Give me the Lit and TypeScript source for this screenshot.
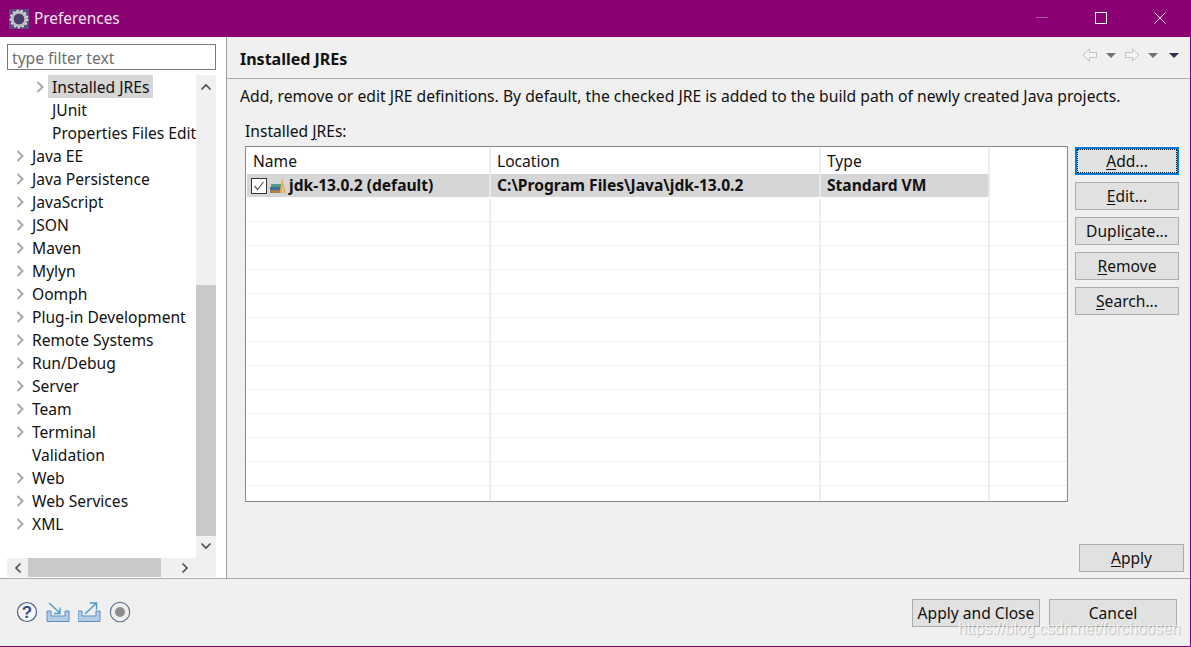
import { LitElement, html, css, svg } from "lit";
import { customElement } from "lit/decorators.js";

const arrow = svg`<path d="M1.5 1 L6.5 6 L1.5 11" fill="none" stroke="#a8a8a8" stroke-width="2"/>`;
const treeItems: [string, boolean, boolean][] = [
  ["Installed JREs", true, true],
  ["JUnit", true, false],
  ["Properties Files Editor", true, false],
  ["Java EE", false, false],
  ["Java Persistence", false, false],
  ["JavaScript", false, false],
  ["JSON", false, false],
  ["Maven", false, false],
  ["Mylyn", false, false],
  ["Oomph", false, false],
  ["Plug-in Development", false, false],
  ["Remote Systems", false, false],
  ["Run/Debug", false, false],
  ["Server", false, false],
  ["Team", false, false],
  ["Terminal", false, false],
  ["Validation", false, false],
  ["Web", false, false],
  ["Web Services", false, false],
  ["XML", false, false],
];
const noArrow = new Set(["JUnit", "Properties Files Editor", "Validation"]);

@customElement("app-root")
export class AppRoot extends LitElement {
  static styles = css`
    :host { display: block; width: 1191px; height: 647px; position: relative; overflow: hidden;
      font-family: "Noto Sans", "Open Sans", sans-serif; font-size: 15.6px; color: #111; background: #f0f0f0; }
    .win { height: 647px; display: grid; grid-template-rows: 37px 1fr 67px; border-right: 1px solid #8b0075; border-bottom: 1px solid #8b0075; box-sizing: border-box; }
    .title { background: #8b0073; color: #f6e8f2; display: flex; align-items: center; padding-left: 9px; gap: 5px; font-size: 15.4px; }
    .title .spacer { flex: 1; }
    .title svg { display: block; }
    .wbtn { width: 54px; display: flex; justify-content: center; margin-top: -1px; }
    .wbtn.close { margin-right: 3px; }
    .main { display: grid; grid-template-columns: 227px 1fr; border-bottom: 1px solid #aaa; min-height: 0; }
    .left { background: #fff; border-right: 1px solid #a0a0a0; padding: 7px 10px 0 7px; display: flex; flex-direction: column; min-height: 0; }
    .filter { height: 26px; box-sizing: border-box; border: 1px solid #7a7a7a; background: #fff; color: #6d6d6d; padding-left: 4px; line-height: 26px; flex: none; }
    .treewrap { margin-top: 5px; height: 483px; display: grid; grid-template-columns: 189px 20px; flex: none; }
    .tree { overflow: hidden; }
    .row { height: 23px; display: flex; align-items: center; white-space: nowrap; position: relative; }
    .row svg { flex: none; width: 8px; height: 12px; margin-left: 9px; margin-right: 8px; }
    .row.child svg { margin-left: 29px; margin-right: 4px; }
    .row.none svg { visibility: hidden; }
    .row .lbl { padding: 0 4px 0 0; height: 23px; line-height: 25px; }
    .row.child .lbl { padding-left: 4px; }
    .row.sel .lbl { background: #d6d6d6; }
    .vbar { background: #f0f0f0; display: grid; grid-template-rows: 23px 187px 251px 1fr; }
    .vbar .thumb { background: #c9c9c9; grid-row: 3; }
    .vbar .up, .vbar .down { display: flex; justify-content: center; align-items: center; }
    .vbar .down { grid-row: 4; padding-bottom: 2px; }
    .hbar { height: 19px; width: 209px; background: #f0f0f0; display: grid; grid-template-columns: 21px 133px 1fr; flex: none; }
    .hbar .thumb { background: #c9c9c9; }
    .hbar div { display: flex; align-items: center; justify-content: center; }
    .hbar .next { justify-content: flex-start; padding-left: 20px; }
    .right { background: #f0f0f0; display: flex; flex-direction: column; min-height: 0; }
    .head { height: 42px; box-sizing: border-box; border-bottom: 1px solid #a8a8a8; display: flex; align-items: center; padding: 0 10px 0 13px; }
    .head b { flex: 1; font-weight: 700; font-size: 16px; margin-top: 2px; }
    .nav { display: flex; align-items: flex-start; margin-top: -5px; }
    .nav svg { display: block; }
    .desc { padding: 5px 0 0 13px; height: 24px; line-height: 24px; font-size: 15.7px; }
    .lab { padding: 11px 0 0 18px; line-height: 24px; height: 24px; }
    u { text-underline-offset: 2px; text-decoration-thickness: 1px; }
    .body { display: flex; padding: 3px 0 0 18px; gap: 7px; }
    .table { width: 823px; height: 356px; box-sizing: border-box; border: 1px solid #8a8a8a; background: #fff; overflow: hidden; flex: none; }
    .tr { display: grid; grid-template-columns: 245px 330px 169px 1fr; height: 24px; box-sizing: border-box; border-bottom: 1px solid #eef0f4; }
    .tr > div { border-right: 2px solid #eaedf4; padding-left: 6px; display: flex; align-items: center; white-space: nowrap; line-height: 22px; }
    .tr > div:last-child { border-right: 0; }
    .tr > div:first-child { padding-left: 7px; }
    .tr.hd { height: 27px; border-bottom: 0; }
    .tr.data { font-weight: 700; height: 23px; border-bottom: 0; margin-bottom: 1px; }
    .tr.data > div { padding-bottom: 1px; }
    .tr.data > div:not(:last-child) { background: #d6d6d6; border-right-color: #e6e8ee; }
    .tr.data > div:first-child { margin-left: 1px; padding-left: 4px; gap: 3px; }
    .tr.data svg { flex: none; display: block; margin-top: 1px; }
    .btns { display: flex; flex-direction: column; gap: 7px; width: 104px; padding-top: 1px; }
    .btn { height: 28px; box-sizing: border-box; border: 1px solid #adadad; background: #e1e1e1; display: flex; align-items: center; justify-content: center; color: #111; }
    .btn.def { border: 2px solid #0078d7; position: relative; }
    .btn.def::after { content: ""; position: absolute; inset: 0; border: 1px dotted #111; }
    .applyrow { display: flex; justify-content: flex-end; padding: 42px 6px 0 0; }
    .applyrow .btn { width: 105px; }
    .foot { display: flex; align-items: center; padding: 0 13px 0 16px; background: #f0f0f0; }
    .foot .icons { display: flex; gap: 8px; flex: 1; align-items: center; margin-top: -1px; }
    .foot .icons svg { display: block; }
    .foot .icons svg.rec { margin-left: -1px; }
    .foot .btn { width: 128px; margin-left: 9px; }
    .wm { position: absolute; left: 958px; top: 620px; font-family: "Liberation Sans", sans-serif; font-size: 15.7px; color: rgba(255,255,255,.72); text-shadow: 1px 1px 1px rgba(0,0,0,.22); pointer-events: none; white-space: nowrap; }
  `;

  render() {
    const emptyRows = Array.from({ length: 13 });
    return html`
      <div class="win">
        <div class="title">
          <svg width="20" height="20" viewBox="0 0 20 20">
            <rect width="20" height="20" fill="#5c4a80"/>
            <circle cx="10" cy="10" r="6.8" fill="none" stroke="#bdbdbd" stroke-width="3"/>
            <circle cx="10" cy="10" r="8.6" fill="none" stroke="#e8e8e8" stroke-width="1.6" stroke-dasharray="2 2.2"/>
            <circle cx="10" cy="10" r="5.2" fill="#4a3f68"/>
          </svg>
          <span>Preferences</span>
          <span class="spacer"></span>
          <div class="wbtn"><svg width="12" height="12"><rect y="5" width="12" height="1" fill="#a85a98"/></svg></div>
          <div class="wbtn"><svg width="12" height="12"><rect x=".5" y=".5" width="11" height="11" fill="none" stroke="#fff"/></svg></div>
          <div class="wbtn close"><svg width="12" height="12"><path d="M.5 .5 L11.5 11.5 M11.5 .5 L.5 11.5" stroke="#f6e6f2" stroke-width="1"/></svg></div>
        </div>
        <div class="main">
          <div class="left">
            <div class="filter">type filter text</div>
            <div class="treewrap">
              <div class="tree">
                ${treeItems.map(([t, child, sel]) => html`
                  <div class="row ${child ? "child" : ""} ${sel ? "sel" : ""} ${noArrow.has(t) ? "none" : ""}">
                    <svg viewBox="0 0 8 12">${arrow}</svg><span class="lbl">${t}</span>
                  </div>`)}
              </div>
              <div class="vbar">
                <div class="up"><svg width="12" height="8"><path d="M1.5 6.5 L6 2 L10.5 6.5" fill="none" stroke="#505050" stroke-width="1.7"/></svg></div>
                <div></div>
                <div class="thumb"></div>
                <div class="down"><svg width="12" height="8"><path d="M1.5 1.5 L6 6 L10.5 1.5" fill="none" stroke="#505050" stroke-width="1.7"/></svg></div>
              </div>
            </div>
            <div class="hbar">
              <div><svg width="8" height="12"><path d="M6.5 1.5 L2 6 L6.5 10.5" fill="none" stroke="#505050" stroke-width="1.7"/></svg></div>
              <div class="thumb"></div>
              <div class="next"><svg width="8" height="12"><path d="M1.5 1.5 L6 6 L1.5 10.5" fill="none" stroke="#505050" stroke-width="1.7"/></svg></div>
            </div>
          </div>
          <div class="right">
            <div class="head">
              <b>Installed JREs</b>
              <div class="nav">
                <svg width="98" height="14" viewBox="0 0 98 14">
                  <path d="M1 7 L7.5 1 V4.5 H14.5 V9.5 H7.5 V13 Z" fill="#f4f4f4" stroke="#c2c2c2"/>
                  <path d="M24 5 H34 L29 10 Z" fill="#707070"/>
                  <path d="M57 7 L50.5 1 V4.5 H43.5 V9.5 H50.5 V13 Z" fill="#f4f4f4" stroke="#c2c2c2"/>
                  <path d="M66 5 H76 L71 10 Z" fill="#707070"/>
                  <path d="M87 5 H97 L92 10 Z" fill="#3a2a55"/>
                </svg>
              </div>
            </div>
            <div class="desc">Add, remove or edit JRE definitions. By default, the checked JRE is added to the build path of newly created Java projects.</div>
            <div class="lab">Installed <u>J</u>REs:</div>
            <div class="body">
              <div class="table">
                <div class="tr hd"><div>Name</div><div>Location</div><div>Type</div><div></div></div>
                <div class="tr data">
                  <div>
                    <svg width="16" height="16" viewBox="0 0 16 16"><rect x=".5" y=".5" width="15" height="15" fill="#fff" stroke="#333"/><path d="M3.5 8 L6.5 11.5 L12.5 4" fill="none" stroke="#555" stroke-width="1.2"/></svg>
                    <svg width="16" height="16" viewBox="0 0 16 16"><rect x="1" y="6" width="10" height="3" fill="#4f9a86"/><rect x="0" y="9" width="11" height="3" fill="#3f6f9f"/><rect x="0" y="12" width="12" height="3" fill="#b07a4a"/><path d="M9.5 15 L12 0 L16 15 H13.6 L12.3 8 L11.4 15 Z" fill="#eab040"/></svg>
                    <span>jdk-13.0.2 (default)</span>
                  </div>
                  <div>C:\\Program Files\\Java\\jdk-13.0.2</div>
                  <div>Standard VM</div>
                  <div></div>
                </div>
                ${emptyRows.map(() => html`<div class="tr"><div></div><div></div><div></div><div></div></div>`)}
              </div>
              <div class="btns">
                <div class="btn def"><span><u>A</u>dd...</span></div>
                <div class="btn"><span><u>E</u>dit...</span></div>
                <div class="btn"><span>Dupli<u>c</u>ate...</span></div>
                <div class="btn"><span><u>R</u>emove</span></div>
                <div class="btn"><span><u>S</u>earch...</span></div>
              </div>
            </div>
            <div class="applyrow"><div class="btn"><span><u>A</u>pply</span></div></div>
          </div>
        </div>
        <div class="foot">
          <div class="icons">
            <svg width="22" height="22" viewBox="0 0 22 22"><circle cx="11" cy="11" r="9.5" fill="#f4f6f8" stroke="#4a6080" stroke-width="1.2"/><text x="11" y="17" text-anchor="middle" font-family="Liberation Sans" font-weight="700" font-size="17" fill="#3a4e78">?</text></svg>
            <svg width="24" height="22" viewBox="0 0 24 22"><path d="M1 10 V20.5 H23 V10 H19 V15 H5 V10 Z" fill="#b4cde6" stroke="#5f8fbf"/><path d="M3 2 L14 12 M14 6.5 V12.5 H8" fill="none" stroke="#4a9ac8" stroke-width="1.4"/></svg>
            <svg width="24" height="22" viewBox="0 0 24 22"><path d="M0 10 V20.5 H22 V10 H18 V15 H4 V10 Z" fill="#b4cde6" stroke="#5f8fbf"/><path d="M7 13 L18 2.5 M12 2 H18.5 V8.5" fill="none" stroke="#4a9ac8" stroke-width="1.4"/></svg>
            <svg class="rec" width="22" height="22" viewBox="0 0 22 22"><circle cx="11" cy="11" r="9.7" fill="#f0f0f0" stroke="#5a6a85" stroke-width="1.1"/><circle cx="11" cy="11" r="5" fill="#8e8e8e"/></svg>
          </div>
          <div class="btn">Apply and Close</div>
          <div class="btn">Cancel</div>
        </div>
      </div>
      <div class="wm">https://blog.csdn.net/forchoosen</div>
    `;
  }
}
